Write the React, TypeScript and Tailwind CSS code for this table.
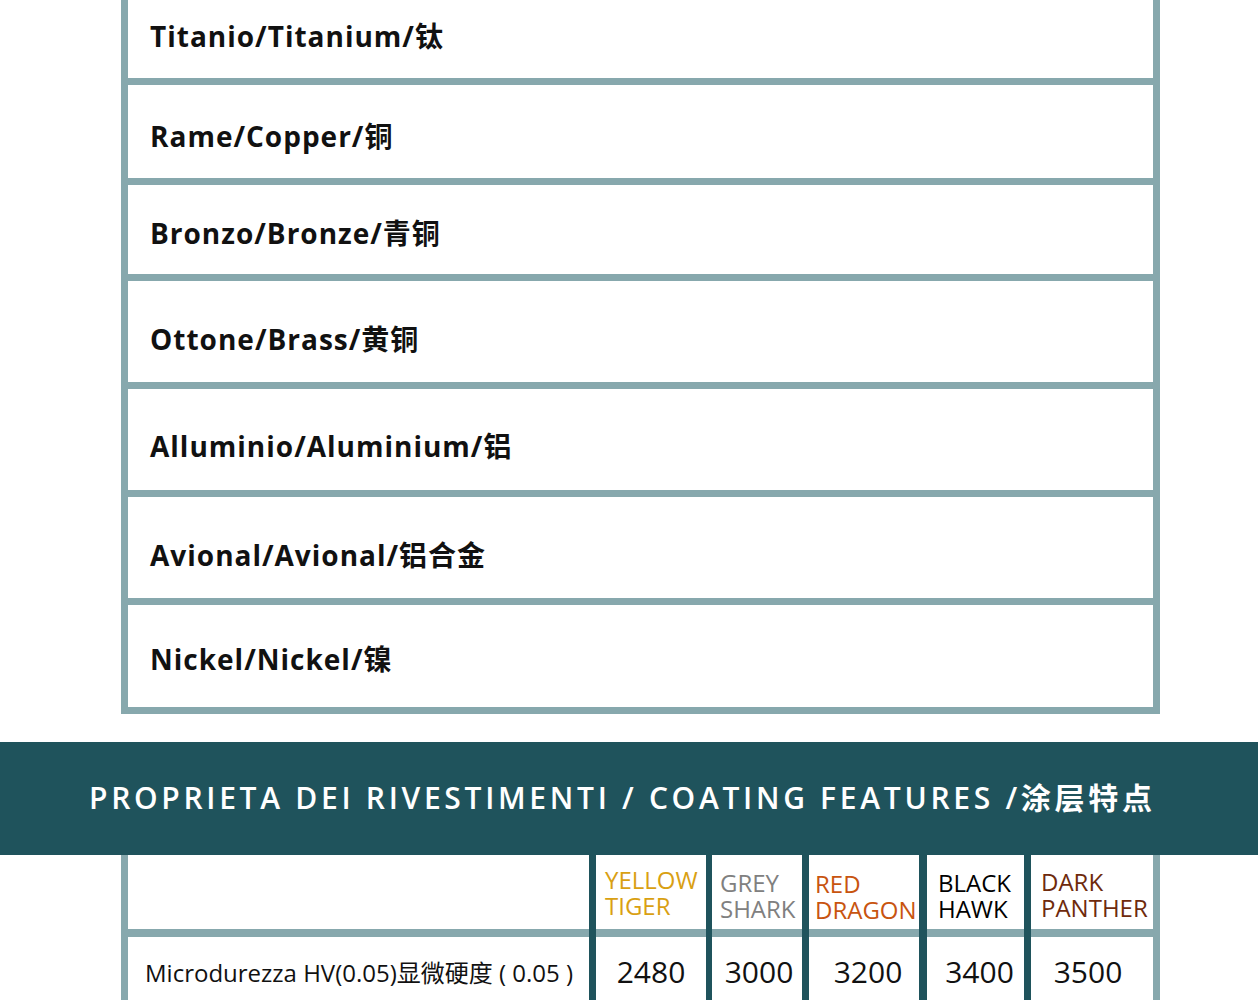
import React from "react";

const metals: { label: string; h: string; pt: string }[] = [
  { label: "Titanio/Titanium/钛", h: "h-[85px]", pt: "pt-[22px]" },
  { label: "Rame/Copper/铜", h: "h-[100px]", pt: "pt-[37px]" },
  { label: "Bronzo/Bronze/青铜", h: "h-[96px]", pt: "pt-[34px]" },
  { label: "Ottone/Brass/黄铜", h: "h-[108px]", pt: "pt-[44px]" },
  { label: "Alluminio/Aluminium/铝", h: "h-[108px]", pt: "pt-[43px]" },
  { label: "Avional/Avional/铝合金", h: "h-[108px]", pt: "pt-[44px]" },
  { label: "Nickel/Nickel/镍", h: "h-[109px]", pt: "pt-[40px]" },
];

type Col = {
  w: string;
  l1: string;
  l2: string;
  color: string;
  pt: string;
  pl: string;
  value: string;
  vpad: string;
};

const cols: Col[] = [
  { w: "w-[110px]", l1: "YELLOW", l2: "TIGER", color: "text-[#d9a012]", pt: "pt-[12px]", pl: "pl-[9px]", value: "2480", vpad: "" },
  { w: "w-[90px]", l1: "GREY", l2: "SHARK", color: "text-[#808080]", pt: "pt-[15px]", pl: "pl-[8px]", value: "3000", vpad: "pl-[4px]" },
  { w: "w-[110px]", l1: "RED", l2: "DRAGON", color: "text-[#c8540f]", pt: "pt-[16px]", pl: "pl-[6px]", value: "3200", vpad: "pl-[8px]" },
  { w: "w-[97px]", l1: "BLACK", l2: "HAWK", color: "text-[#000000]", pt: "pt-[15px]", pl: "pl-[11px]", value: "3400", vpad: "pl-[8px] pt-[3px]" },
  { w: "w-[122px]", l1: "DARK", l2: "PANTHER", color: "text-[#6e2a0c]", pt: "pt-[14px]", pl: "pl-[10px]", value: "3500", vpad: "pr-[8px] pt-[2px]" },
];

const dividers = ["w-[7px]", "w-[6px]", "w-[7px]", "w-[8px]", "w-[7px]"];

export default function App() {
  return (
    <div className="w-[1258px] min-h-[1000px] bg-white font-['Open_Sans','Noto_Sans_CJK_SC',sans-serif] overflow-hidden">
      {/* Metals table */}
      <div className="ml-[121px] w-[1039px] border-x-[7px] border-[#87a8ad] flex flex-col">
        {metals.map((m, i) => (
          <div
            key={i}
            className={`${m.h} ${m.pt} border-b-[7px] border-[#87a8ad] pl-[22px] box-border`}
          >
            <span className="block text-[28px] leading-[28px] font-bold tracking-[1px] text-[#111111]">
              {m.label}
            </span>
          </div>
        ))}
      </div>

      <div className="h-[28px]" />

      {/* Band */}
      <div className="h-[113px] bg-[#1f535c] pt-[41px] pl-[89px]">
        <span className="block text-[30px] leading-[30px] font-semibold text-white tracking-[3.7px] whitespace-nowrap">
          PROPRIETA DEI RIVESTIMENTI / COATING FEATURES /涂层特点
        </span>
      </div>

      {/* Coating table */}
      <div className="ml-[121px] w-[1039px] border-x-[7px] border-[#87a8ad] flex">
        <div className="w-[461px] flex flex-col">
          <div className="h-[74px] bg-white" />
          <div className="h-[8px] bg-[#87a8ad]" />
          <div className="h-[80px] pt-[24px] pl-[17px]">
            <span className="block text-[24px] leading-[24px] text-[#111111] whitespace-nowrap">
              Microdurezza HV(0.05)显微硬度 ( 0.05 )
            </span>
          </div>
        </div>
        {cols.map((c, i) => (
          <React.Fragment key={i}>
            <div className={`${dividers[i]} bg-[#1f535c]`} />
            <div className={`${c.w} flex flex-col`}>
              <div className={`h-[74px] ${c.pt} ${c.pl} ${c.color} text-[24px] leading-[26px] whitespace-nowrap`}>
                <div>{c.l1}</div>
                <div>{c.l2}</div>
              </div>
              <div className="h-[8px] bg-[#87a8ad]" />
              <div className={`h-[80px] pt-[20px] text-center ${c.vpad}`}>
                <span className="block text-[30px] leading-[30px] text-[#111111]">{c.value}</span>
              </div>
            </div>
          </React.Fragment>
        ))}
      </div>
    </div>
  );
}
